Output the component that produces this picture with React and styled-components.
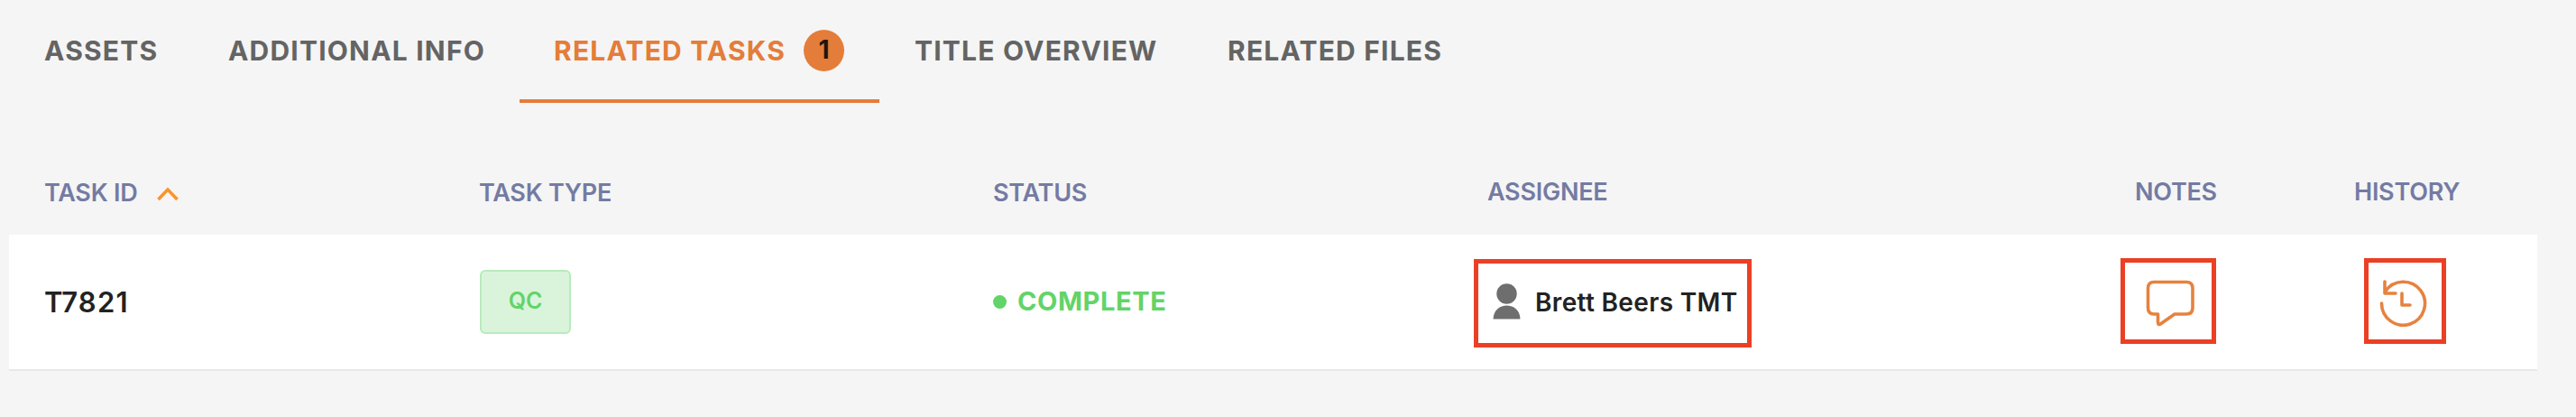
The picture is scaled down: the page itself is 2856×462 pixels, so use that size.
import React from "react";
import styled, { createGlobalStyle } from "styled-components";

const GlobalStyle = createGlobalStyle`
  *, *::before, *::after { box-sizing: border-box; }
  body {
    margin: 0;
    background: #f5f5f5;
    font-family: Inter, "Liberation Sans", sans-serif;
  }
`;

const Page = styled.main`
  height: 462px;
  background: #f5f5f5;
  overflow: hidden;
`;

const TabBar = styled.nav`
  display: flex;
  height: 114px;
  padding-left: 10px;
`;

const Tab = styled.div`
  display: flex;
  gap: 20px;
  width: ${(p) => p.$width}px;
  padding: 33px 0 0 ${(p) => p.$inset ?? 39}px;
  border-bottom: 4px solid ${(p) => (p.$active ? "#e47d3a" : "transparent")};
  color: ${(p) => (p.$active ? "#e47d3a" : "#646464")};
  font-size: 30px;
  font-weight: 700;
  line-height: 46px;
  letter-spacing: 1.2px;
  white-space: nowrap;
`;

const Count = styled.span`
  width: 45px;
  height: 46px;
  border-radius: 50%;
  background: #e47d3a;
  color: #20150e;
  font-size: 28px;
  line-height: 45px;
  letter-spacing: 0;
  text-align: center;
`;

const Table = styled.section`
  width: 2803px;
  margin-left: 10px;
`;

const Row = styled.div`
  display: grid;
  grid-template-columns: 521px 569px 534px 717px 249px 213px;
`;

const HeaderRow = styled(Row)`
  height: 146px;
  padding-top: 79px;
`;

const BodyRow = styled(Row)`
  height: 151px;
  background: #fff;
  border-bottom: 2px solid #e8e8e8;
`;

const HeaderCell = styled.div`
  display: flex;
  align-items: center;
  gap: 22px;
  height: 40px;
  margin-top: ${(p) => p.$lift ?? 0}px;
  padding-left: ${(p) => p.$inset}px;
  color: #747ba3;
  font-size: 27px;
  font-weight: 600;
  letter-spacing: -0.25px;
  white-space: nowrap;
`;

const Cell = styled.div`
  padding: ${(p) => p.$top}px 0 0 ${(p) => p.$inset ?? 0}px;
  white-space: nowrap;
`;

const TaskId = styled.span`
  display: block;
  color: #222;
  font-size: 31px;
  font-weight: 600;
  line-height: 40px;
  letter-spacing: 1.2px;
`;

const TypeChip = styled.span`
  display: block;
  width: 101px;
  height: 71px;
  border: 2px solid #b8ebbb;
  border-radius: 6px;
  background: #daf4dc;
  color: #62d468;
  font-size: 25px;
  font-weight: 600;
  line-height: 65px;
  text-align: center;
`;

const Status = styled.span`
  display: flex;
  align-items: center;
  gap: 12px;
  color: #62d468;
  font-size: 29px;
  font-weight: 700;
  line-height: 40px;
  letter-spacing: 0.6px;
`;

const Dot = styled.i`
  width: 15px;
  height: 15px;
  border-radius: 50%;
  background: #62d468;
`;

const Outlined = styled.div`
  display: flex;
  width: ${(p) => p.$width}px;
  height: ${(p) => p.$height}px;
  border: 5px solid #ea4025;
`;

const AssigneeName = styled.span`
  padding: 23px 0 0 16px;
  color: #222;
  font-size: 28px;
  font-weight: 600;
  line-height: 40px;
  letter-spacing: 0.35px;
`;

const Icon = styled.svg`
  display: block;
  flex: none;
  margin: ${(p) => p.$margin ?? "0"};
  fill: none;
  stroke: #e6823f;
  stroke-width: 3.6;
  stroke-linecap: round;
  stroke-linejoin: round;
`;

const PersonIcon = styled(Icon)`
  fill: #6e6e6e;
  stroke: none;
`;

const SortIcon = styled(Icon)`
  stroke: #fa942f;
  stroke-linecap: butt;
  stroke-linejoin: miter;
`;

export default function App() {
  return (
    <Page>
      <GlobalStyle />
      <TabBar>
        <Tab $width={204}>ASSETS</Tab>
        <Tab $width={362}>ADDITIONAL INFO</Tab>
        <Tab $width={399} $active $inset={38}>
          RELATED TASKS<Count>1</Count>
        </Tab>
        <Tab $width={346}>TITLE OVERVIEW</Tab>
        <Tab $width={318} $inset={40}>RELATED FILES</Tab>
      </TabBar>
      <Table>
        <HeaderRow>
          <HeaderCell $inset={39}>
            TASK ID
            <SortIcon width="24" height="16" viewBox="0 0 24 16" $margin="3px 0 0">
              <path d="M1.5 14 L12 3 L22.5 14" />
            </SortIcon>
          </HeaderCell>
          <HeaderCell $inset={0}>TASK TYPE</HeaderCell>
          <HeaderCell $inset={1}>STATUS</HeaderCell>
          <HeaderCell $inset={15} $lift={-1}>ASSIGNEE</HeaderCell>
          <HeaderCell $inset={16} $lift={-1}>NOTES</HeaderCell>
          <HeaderCell $inset={10} $lift={-1}>HISTORY</HeaderCell>
        </HeaderRow>
        <BodyRow>
          <Cell $top={55} $inset={39}>
            <TaskId>T7821</TaskId>
          </Cell>
          <Cell $top={39} $inset={1}>
            <TypeChip>QC</TypeChip>
          </Cell>
          <Cell $top={54} $inset={1}>
            <Status><Dot />COMPLETE</Status>
          </Cell>
          <Cell $top={27}>
            <Outlined $width={308} $height={98}>
              <PersonIcon width="31" height="40" viewBox="0 0 31 40" $margin="22px 0 0 16px">
                <circle cx="15.5" cy="11.5" r="11.2" />
                <path d="M0.5 39.5 C1 19.5 30 19.5 30.5 39.5 Z" />
              </PersonIcon>
              <AssigneeName>Brett Beers TMT</AssigneeName>
            </Outlined>
          </Cell>
          <Cell $top={26}>
            <Outlined $width={106} $height={95}>
              <Icon width="54" height="54" viewBox="0 0 54 54" $margin="18px 0 0 23px">
                <path d="M9 3.5 H45 Q52 3.5 52 10.5 V32 Q52 39 45 39 H32 L17 49.5 Q13.5 52 13.5 48 V39 H9 Q2.5 39 2.5 32 V10.5 Q2.5 3.5 9 3.5 Z" />
              </Icon>
            </Outlined>
          </Cell>
          <Cell $top={26} $inset={21}>
            <Outlined $width={91} $height={95}>
              <Icon width="54" height="54" viewBox="0 0 54 54" $margin="17px 0 0 11px">
                <path d="M3.5 28 A24 24 0 1 0 7.5 15 M7 4 V17 H19 M26 17 V30 H35" />
              </Icon>
            </Outlined>
          </Cell>
        </BodyRow>
      </Table>
    </Page>
  );
}
